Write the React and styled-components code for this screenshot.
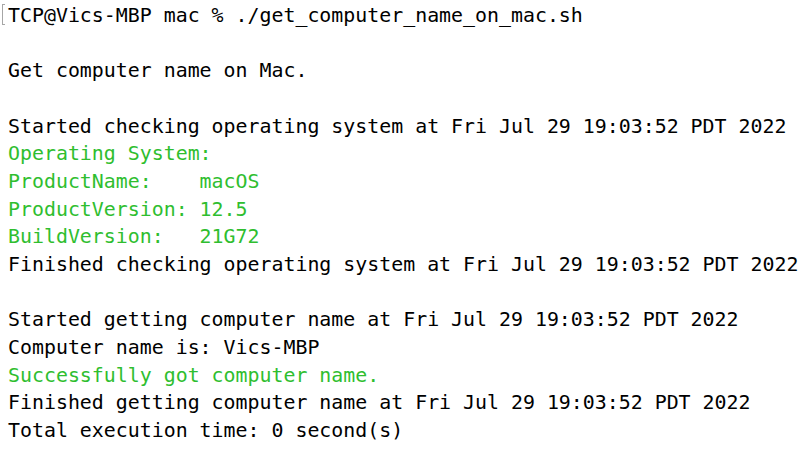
import React from "react";
import styled, { createGlobalStyle } from "styled-components";

const Global = createGlobalStyle`
  html, body { margin: 0; padding: 0; background: #ffffff; }
`;

const Terminal = styled.div`
  width: 812px;
  height: 450px;
  box-sizing: border-box;
  padding: 2px 0 0 8px;
  background: #ffffff;
  font-family: "DejaVu Sans Mono", "Liberation Mono", monospace;
  font-size: 19.9px;
  line-height: 27.67px;
  color: #000000;
  overflow: hidden;
`;

const Line = styled.div`
  position: relative;
  white-space: pre;
  height: 27.67px;
  color: ${(p) => (p.$green ? "#2fbe2f" : "#000000")};
`;

const Prompt = styled(Line)`
  &::before {
    content: "";
    position: absolute;
    left: -6px;
    top: 2px;
    width: 3px;
    height: 21px;
    border: 1.5px solid #a6a6a6;
    border-right: none;
    box-sizing: border-box;
  }
`;

const lines = [
  { t: "" },
  { t: "Get computer name on Mac." },
  { t: "" },
  { t: "Started checking operating system at Fri Jul 29 19:03:52 PDT 2022" },
  { t: "Operating System:", g: true },
  { t: "ProductName:    macOS", g: true },
  { t: "ProductVersion: 12.5", g: true },
  { t: "BuildVersion:   21G72", g: true },
  { t: "Finished checking operating system at Fri Jul 29 19:03:52 PDT 2022" },
  { t: "" },
  { t: "Started getting computer name at Fri Jul 29 19:03:52 PDT 2022" },
  { t: "Computer name is: Vics-MBP" },
  { t: "Successfully got computer name.", g: true },
  { t: "Finished getting computer name at Fri Jul 29 19:03:52 PDT 2022" },
  { t: "Total execution time: 0 second(s)" },
];

export default function App() {
  return (
    <>
      <Global />
      <Terminal>
        <Prompt>TCP@Vics-MBP mac % ./get_computer_name_on_mac.sh</Prompt>
        {lines.map((l, i) => (
          <Line key={i} $green={l.g}>
            {l.t}
          </Line>
        ))}
      </Terminal>
    </>
  );
}
